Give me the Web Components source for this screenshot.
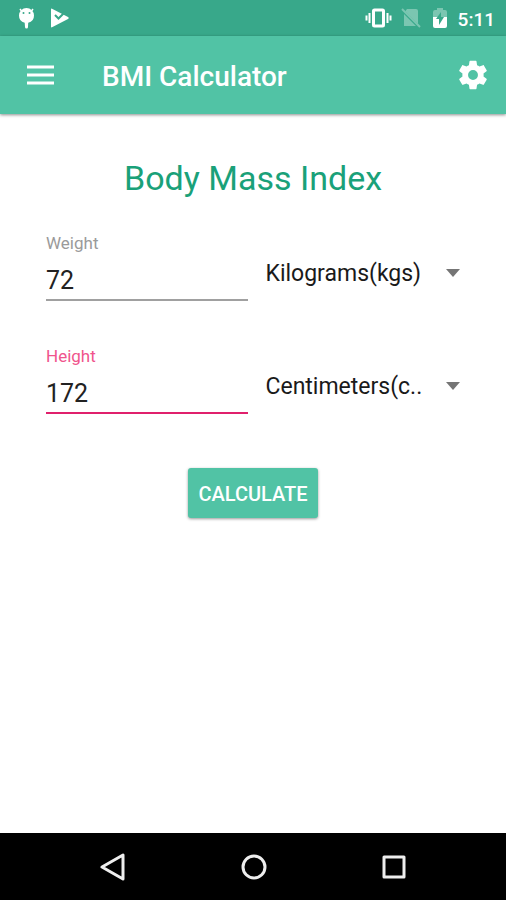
<!DOCTYPE html>
<html lang="en">
<head>
<meta charset="utf-8">
<meta name="viewport" content="width=device-width, initial-scale=1">
<title>BMI Calculator</title>
<style>
  html { height: 100%; }
  body { margin: 0; min-height: 100%; display: flex; background: #fff; font-family: Roboto, "Liberation Sans", sans-serif; }
</style>
</head>
<body>
<bmi-app></bmi-app>
<script>
const define = (name, html, setup) => {
  const template = document.createElement('template');
  template.innerHTML = html;
  customElements.define(name, class extends HTMLElement {
    constructor() {
      super();
      this.attachShadow({ mode: 'open' }).append(template.content.cloneNode(true));
    }
    connectedCallback() {
      if (setup) setup(this, this.shadowRoot);
    }
  });
};

define('status-bar', `
<style>
  :host { display: flex; align-items: center; height: 36px; padding: 0 11px 0 16px; background: #38a88a; color: #fff; }
  svg { display: block; width: 24px; height: 24px; flex: none; }
  .spacer { flex: 1; }
  .left, .right { display: flex; align-items: center; }
  .left { gap: 9px; }
  .right { gap: 6px; }
  time { font-size: 19px; line-height: 24px; font-weight: 500; padding-top: 3px; }
</style>
<div class="left">
  <svg viewBox="0 0 24 24" aria-hidden="true"><g fill="#fff"><path d="M3 9.500a7.500 7.500 0 0 1 15 0 7.300 7.300 0 0 1-5.800 7.200L12 21a1.500 1.500 0 0 1-3 0l-.3-4.300A7.300 7.300 0 0 1 3 9.500z"/><path d="M5.500 5 4 3M15.500 5 17 3" stroke="#fff" stroke-width="1.500"/></g><circle cx="7.500" cy="7" r="1" fill="#38a88a"/><circle cx="13.500" cy="7" r="1" fill="#38a88a"/></svg>
  <svg viewBox="0 0 24 24" aria-hidden="true"><path d="M2 3.500Q2 2 3.500 3L19 11q1.800 1 0 2L3.500 21Q2 22 2 20.500z" fill="#fff"/><path d="m6 9 3.500 3.500 7-7" fill="none" stroke="#38a88a" stroke-width="2"/></svg>
</div>
<span class="spacer"></span>
<div class="right">
  <svg style="width:28px" viewBox="0 0 28 24" aria-hidden="true"><g fill="none" stroke="#fff"><rect x="9.500" y="4" width="10" height="16" rx="1" stroke-width="3"/><path d="M5.500 7v10M23.500 7v10M2.500 9.500v5M26.500 9.500v5" stroke-width="2"/></g></svg>
  <svg viewBox="0 0 24 24" aria-hidden="true"><path d="M9 3h9q2 0 2 2v15H6V7z" fill="#7bc6b1"/><path d="M4 4l17 17" stroke="#38a88a" stroke-width="3"/><path d="M4 3l18 18" stroke="#7bc6b1" stroke-width="2"/></svg>
  <svg viewBox="0 0 24 24" aria-hidden="true"><path d="M9 2h6v2h2q2 0 2 2v6H5V6q0-2 2-2h2z" fill="#7bc6b1"/><path d="M5 11h14v9q0 2-2 2H7q-2 0-2-2z" fill="#fff"/><path d="M13 6v5h3l-5 8v-6H8z" fill="#38a88a"/></svg>
  <time>5:11</time>
</div>`);

define('app-bar', `
<style>
  :host { display: flex; align-items: center; height: 78px; padding: 0 12px 0 19px; background: #51c3a5; color: #fff; box-shadow: 0 1px 3px rgba(0,0,0,.45); }
  button { display: grid; place-items: center; flex: none; width: 42px; height: 42px; margin: 0; padding: 0; border: 0; background: none; color: inherit; }
  svg { display: block; }
  h1 { flex: 1; margin: 0; padding: 3px 0 0 41px; font-size: 28px; line-height: 36px; font-weight: 500; }
</style>
<button type="button" aria-label="Open menu"><svg width="27" height="20" viewBox="0 0 27 20"><path d="M0 2h27M0 10h27M0 18h27" stroke="#fff" stroke-width="3"/></svg></button>
<h1><slot></slot></h1>
<button type="button" aria-label="Settings"><svg width="34" height="34" viewBox="0 0 24 24" fill="#fff"><path d="M19.430 12.980c.04-.32.07-.64.07-.98s-.03-.66-.07-.98l2.110-1.650c.19-.15.24-.42.12-.64l-2-3.460c-.12-.22-.39-.3-.61-.22l-2.490 1c-.52-.4-1.080-.73-1.690-.98l-.38-2.650A.488.488 0 0 0 14 2h-4c-.25 0-.46.18-.49.42l-.38 2.650c-.61.25-1.170.59-1.690.98l-2.490-1c-.23-.09-.49 0-.61.22l-2 3.460c-.13.22-.07.49.12.64l2.110 1.650c-.04.32-.07.65-.07.98s.03.66.07.98l-2.110 1.650c-.19.15-.24.42-.12.64l2 3.460c.12.22.39.3.61.22l2.490-1c.52.4 1.080.73 1.690.98l.38 2.650c.03.24.24.42.49.42h4c.25 0 .46-.18.49-.42l.38-2.650c.61-.25 1.170-.59 1.690-.98l2.490 1c.23.09.49 0 .61-.22l2-3.460c.12-.22.07-.49-.12-.64zM12 15.500a3.500 3.500 0 1 1 0-7 3.500 3.500 0 0 1 0 7z"/></svg></button>`);

define('measure-field', `
<style>
  :host { display: grid; grid-template-columns: 51fr 49fr; gap: 17px; --label: #9a9a9a; --line: #a0a0a0; }
  :host([active]) { --label: #f0548c; --line: #e0206c; }
  .entry { display: flex; flex-direction: column; }
  label { font-size: 17px; line-height: 20px; color: var(--label); }
  input { box-sizing: border-box; width: 100%; height: 48px; margin: 0; padding: 9px 0 0; border: 0; border-bottom: 2px solid var(--line); border-radius: 0; outline: 0; background: none; font: 25px/36px Roboto, "Liberation Sans", sans-serif; color: #222; }
  .unit { display: grid; align-items: center; height: 40px; margin-top: 20px; }
  select, svg { grid-area: 1 / 1; }
  select { appearance: none; box-sizing: border-box; width: 100%; height: 40px; margin: 0; padding: 2px 32px 0 0; border: 0; background: none; font: 23px/32px Roboto, "Liberation Sans", sans-serif; color: #1a1a1a; }
  svg { justify-self: end; pointer-events: none; }
</style>
<div class="entry"><label for="value"></label><input id="value" type="text" inputmode="decimal"></div>
<div class="unit"><select><option></option></select><svg width="14" height="8" viewBox="0 0 14 8" aria-hidden="true"><path d="M0 0h14L7 8z" fill="#757575"/></svg></div>`,
(host, root) => {
  root.querySelector('label').textContent = host.getAttribute('label');
  root.querySelector('input').value = host.getAttribute('value');
  root.querySelector('option').textContent = host.getAttribute('unit');
  root.querySelector('select').setAttribute('aria-label', host.getAttribute('label') + ' unit');
});

define('action-button', `
<style>
  :host { display: block; }
  button { display: block; margin: 0; padding: 13px 10px 11px; border: 0; border-radius: 3px; background: #51c3a5; color: #fff; font: 500 20px/26px Roboto, "Liberation Sans", sans-serif; box-shadow: 0 1px 3px rgba(0,0,0,.4); }
</style>
<button type="button"><slot></slot></button>`);

define('nav-bar', `
<style>
  :host { display: flex; justify-content: center; height: 67px; padding-left: 2px; background: #000; }
  button { display: grid; place-items: center; flex: 0 1 140px; margin: 0; padding: 0; border: 0; background: none; }
  svg { display: block; }
  g { fill: none; stroke: #eee; stroke-width: 3; stroke-linejoin: round; }
</style>
<button type="button" aria-label="Back"><svg width="28" height="28" viewBox="0 0 28 28"><g><path d="M23 2v24L2 14z"/></g></svg></button>
<button type="button" aria-label="Home"><svg width="28" height="28" viewBox="0 0 28 28"><g><circle cx="14" cy="14" r="11"/></g></svg></button>
<button type="button" aria-label="Recent apps"><svg width="28" height="28" viewBox="0 0 28 28"><g><rect x="4" y="4" width="20" height="20"/></g></svg></button>`);

define('bmi-app', `
<style>
  :host { display: flex; flex-direction: column; flex: 1; min-height: 100vh; }
  app-bar { flex: none; }
  main { flex: 1; display: flex; flex-direction: column; padding: 44px 46px 0; }
  h2 { margin: 0 0 14px; text-align: center; font-size: 34px; line-height: 40px; font-weight: 400; color: #1aa179; }
  .fields { display: grid; gap: 45px; padding-top: 21px; }
  action-button { align-self: center; margin-top: 54px; }
</style>
<status-bar></status-bar>
<app-bar>BMI Calculator</app-bar>
<main>
  <h2>Body Mass Index</h2>
  <div class="fields">
    <measure-field label="Weight" value="72" unit="Kilograms(kgs)"></measure-field>
    <measure-field active label="Height" value="172" unit="Centimeters(c.."></measure-field>
  </div>
  <action-button>CALCULATE</action-button>
</main>
<nav-bar></nav-bar>`);
</script>
</body>
</html>
